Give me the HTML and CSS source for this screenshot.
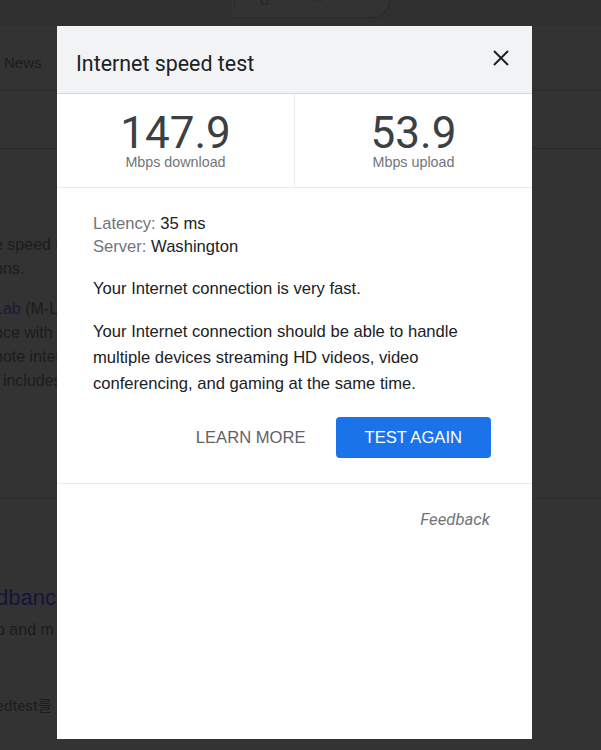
FILE: index.html
```html
<!DOCTYPE html>
<html lang="en">
<head>
<meta charset="utf-8">
<title>Internet speed test</title>
<link rel="stylesheet" href="styles.css">
</head>
<body>
<div class="page">
  <header class="topbar">
    <div class="searchbox">
      <span class="sb-divider"></span>
      <span class="sb-mic"></span>
      <span class="sb-lens"></span>
    </div>
  </header>
  <nav class="tabs"><span class="tab">News</span></nav>
  <div class="toolsrow"></div>
  <section class="results">
    <div class="snippet">
      <p>e speed test</p>
      <p>ons.</p>
    </div>
    <div class="snippet">
      <p><span class="bg-link">Lab</span> (M-Lab)</p>
      <p>nce with</p>
      <p>note internet</p>
      <p>t includes</p>
    </div>
  </section>
  <div class="sep"></div>
  <section class="results2">
    <p class="bg-title">dbanc</p>
    <p>p and m</p>
    <p class="bg-cite">edtest를</p>
  </section>
</div>

<div class="dialog" role="dialog" aria-label="Internet speed test">
  <div class="dlg-header">
    <h1 class="dlg-title">Internet speed test</h1>
    <button class="close-btn" aria-label="Close">
      <svg width="16" height="16" viewBox="0 0 16 16"><path d="M1 1 L15 15 M15 1 L1 15" stroke="#202124" stroke-width="2" fill="none"/></svg>
    </button>
  </div>
  <div class="stats">
    <div class="stat">
      <div class="stat-num">147.9</div>
      <div class="stat-label">Mbps download</div>
    </div>
    <div class="stat">
      <div class="stat-num">53.9</div>
      <div class="stat-label">Mbps upload</div>
    </div>
  </div>
  <div class="dlg-body">
    <div class="meta">
      <div><span class="meta-key">Latency:</span> 35 ms</div>
      <div><span class="meta-key">Server:</span> Washington</div>
    </div>
    <p class="msg">Your Internet connection is very fast.</p>
    <p class="msg">Your Internet connection should be able to handle multiple devices streaming HD videos, video conferencing, and gaming at the same time.</p>
  </div>
  <div class="actions">
    <button class="btn btn-text">LEARN MORE</button>
    <button class="btn btn-primary">TEST AGAIN</button>
  </div>
  <div class="dlg-footer">
    <span class="feedback">Feedback</span>
  </div>
</div>
</body>
</html>
```

FILE: styles.css
```css
* { box-sizing: border-box; }
html, body { margin: 0; padding: 0; }
body {
  width: 601px;
  height: 750px;
  overflow: hidden;
  background: #333333;
  font-family: "Liberation Sans", Arial, sans-serif;
  position: relative;
}
p { margin: 0; }

/* dimmed page behind the dialog */
.page {
  color: #1c1c1c;
}
.topbar {
  height: 26px;
  background: #303030;
  position: relative;
}
.searchbox {
  position: relative;
  margin-left: 232px;
  width: 158px;
  height: 18px;
  border: 1px solid #2a2a2a;
  border-top: none;
  border-radius: 0 0 18px 0;
  border-left: none;
  background: #333;
}
.sb-divider {
  position: absolute;
  left: 2px;
  top: 0;
  width: 1px;
  height: 8px;
  background: #2a2a2a;
}
.sb-mic {
  position: absolute;
  left: 29px;
  top: 0;
  width: 7px;
  height: 5px;
  border: 1px solid #262626;
  border-top: none;
  border-radius: 0 0 4px 4px;
}
.sb-lens {
  position: absolute;
  left: 79px;
  top: 0;
  width: 12px;
  height: 2px;
  background: #3a2a2a;
}
.tabs {
  height: 65px;
  border-bottom: 1px solid #2b2b2b;
  display: flex;
  align-items: center;
  padding-left: 4px;
  padding-top: 8px;
  font-size: 15px;
}
.tab { color: #1c1c1c; }
.toolsrow {
  height: 58px;
  border-bottom: 1px solid #2b2b2b;
}
.results {
  padding-top: 84px;
  margin-left: -6px;
  font-size: 16px;
  line-height: 24px;
  white-space: nowrap;
  color: #1c1c1c;
  height: 349px;
}
.snippet { margin-bottom: 16px; }
.bg-link { color: #1b1a3a; }
.sep {
  border-top: 1px solid #2b2b2b;
}
.results2 {
  padding-top: 84px;
  margin-left: -4px;
  white-space: nowrap;
  color: #1c1c1c;
  font-size: 16px;
}
.bg-title {
  font-size: 22px;
  line-height: 30px;
  color: #15133a;
}
.results2 p:nth-child(2) { line-height: 34px; }
.bg-cite {
  margin-top: 49px;
  font-size: 15px;
  line-height: 20px;
  font-family: Roboto, "Noto Sans CJK KR", sans-serif;
}

/* dialog */
.dialog {
  position: absolute;
  left: 57px;
  top: 26px;
  width: 475px;
  height: 713px;
  background: #ffffff;
  display: flex;
  flex-direction: column;
}
.dlg-header {
  height: 68px;
  background: #f1f3f4;
  border-bottom: 1px solid #d6d8db;
  display: flex;
  align-items: center;
  justify-content: space-between;
  padding: 6px 23px 0 19px;
}
.dlg-title {
  margin: 0;
  font-family: Roboto, sans-serif;
  font-weight: 400;
  font-size: 21.4px;
  color: #202124;
  margin-top: 2px;
}
.close-btn {
  border: none;
  background: transparent;
  padding: 0;
  width: 16px;
  height: 16px;
  margin-top: -9px;
  display: flex;
}
.stats {
  display: grid;
  grid-template-columns: 237px 1fr;
  border-bottom: 1px solid #ebebeb;
  height: 94px;
}
.stat {
  display: flex;
  flex-direction: column;
  align-items: center;
  padding-top: 19px;
}
.stat + .stat { border-left: 1px solid #ebebeb; }
.stat-num {
  font-family: Roboto, sans-serif;
  font-size: 44px;
  line-height: 40px;
  color: #3c4043;
}
.stat-label {
  font-size: 14.3px;
  line-height: 16px;
  color: #70757a;
  margin-top: 1px;
}
.dlg-body {
  padding: 24px 36px 0 36px;
  font-size: 16.6px;
  color: #202124;
}
.meta { line-height: 23px; }
.meta-key { color: #70757a; }
.msg {
  line-height: 26px;
  margin-top: 18px;
}
.msg + .msg { margin-top: 17px; }
.actions {
  display: flex;
  justify-content: flex-end;
  gap: 1px;
  padding: 20px 41px 25px 0;
  border-bottom: 1px solid #ebebeb;
}
.btn {
  font-family: "Liberation Sans", Arial, sans-serif;
  font-size: 16.6px;
  height: 41px;
  padding: 0 29px;
  border-radius: 4px;
  border: none;
  cursor: pointer;
}
.btn-text {
  background: transparent;
  color: #5f6368;
}
.btn-primary {
  background: #1a73e8;
  color: #ffffff;
}
.dlg-footer {
  display: flex;
  justify-content: flex-end;
  padding: 25px 42px 0 0;
}
.feedback {
  font-family: Roboto, sans-serif;
  font-style: italic;
  font-size: 16.7px;
  line-height: 22px;
  color: #70757a;
}
```
